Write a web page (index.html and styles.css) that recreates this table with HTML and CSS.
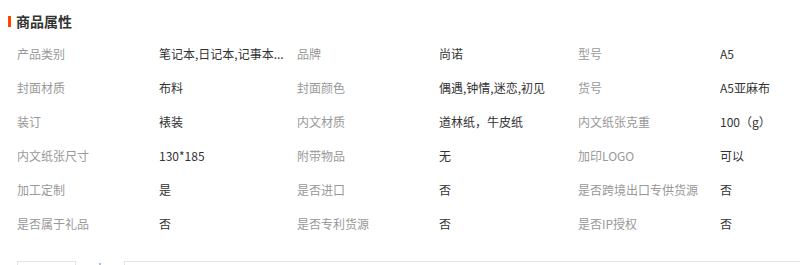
FILE: index.html
```html
<!DOCTYPE html>
<html lang="zh-CN">
<head>
<meta charset="utf-8">
<link rel="stylesheet" href="styles.css">
</head>
<body>
<div class="page">
  <div class="header"><span class="bar"></span><span class="title">商品属性</span></div>
  <div class="attrs">
    <div class="k">产品类别</div><div class="v">笔记本,日记本,记事本...</div>
    <div class="k">品牌</div><div class="v">尚诺</div>
    <div class="k">型号</div><div class="v">A5</div>

    <div class="k">封面材质</div><div class="v">布料</div>
    <div class="k">封面颜色</div><div class="v">偶遇,钟情,迷恋,初见</div>
    <div class="k">货号</div><div class="v">A5亚麻布</div>

    <div class="k">装订</div><div class="v">裱装</div>
    <div class="k">内文材质</div><div class="v">道林纸，牛皮纸</div>
    <div class="k">内文纸张克重</div><div class="v">100（g）</div>

    <div class="k">内文纸张尺寸</div><div class="v">130*185</div>
    <div class="k">附带物品</div><div class="v">无</div>
    <div class="k">加印LOGO</div><div class="v">可以</div>

    <div class="k">加工定制</div><div class="v">是</div>
    <div class="k">是否进口</div><div class="v">否</div>
    <div class="k">是否跨境出口专供货源</div><div class="v">否</div>

    <div class="k">是否属于礼品</div><div class="v">否</div>
    <div class="k">是否专利货源</div><div class="v">否</div>
    <div class="k">是否IP授权</div><div class="v">否</div>
  </div>
  <div class="footer">
    <div class="box-small"></div>
    <span class="dot"></span>
    <div class="box-wide"></div>
  </div>
</div>
</body>
</html>
```

FILE: styles.css
```css
html, body {
  margin: 0;
  padding: 0;
  background: #fff;
}
.page {
  width: 800px;
  height: 265px;
  overflow: hidden;
  font-family: "Noto Sans CJK SC", "Noto Sans", sans-serif;
  font-size: 12px;
}
.header {
  display: flex;
  align-items: center;
  height: 22px;
  padding: 10px 0 4px 8px;
}
.bar {
  display: block;
  width: 3px;
  height: 11px;
  background: #ff4400;
  margin-right: 5px;
}
.title {
  font-size: 14px;
  font-weight: bold;
  color: #333;
  line-height: 22px;
}
.attrs {
  display: grid;
  grid-template-columns: 142px 138px 142px 139px 142px 138px;
  grid-auto-rows: 34px;
  align-items: center;
  padding-left: 17px;
  width: 900px;
}
.k {
  color: #999;
  white-space: nowrap;
}
.v {
  color: #333;
  white-space: nowrap;
}
.footer {
  display: flex;
  align-items: flex-start;
  margin-top: 21px;
  padding-left: 17px;
}
.box-small {
  width: 57px;
  height: 30px;
  border: 1px solid #e3e3e3;
}
.dot {
  width: 2px;
  height: 2px;
  margin: 2px 23px 0 23px;
  background: #9ab;
  border-radius: 1px;
}
.box-wide {
  flex: 1;
  height: 30px;
  border: 1px solid #e3e3e3;
  border-right: none;
}
```
